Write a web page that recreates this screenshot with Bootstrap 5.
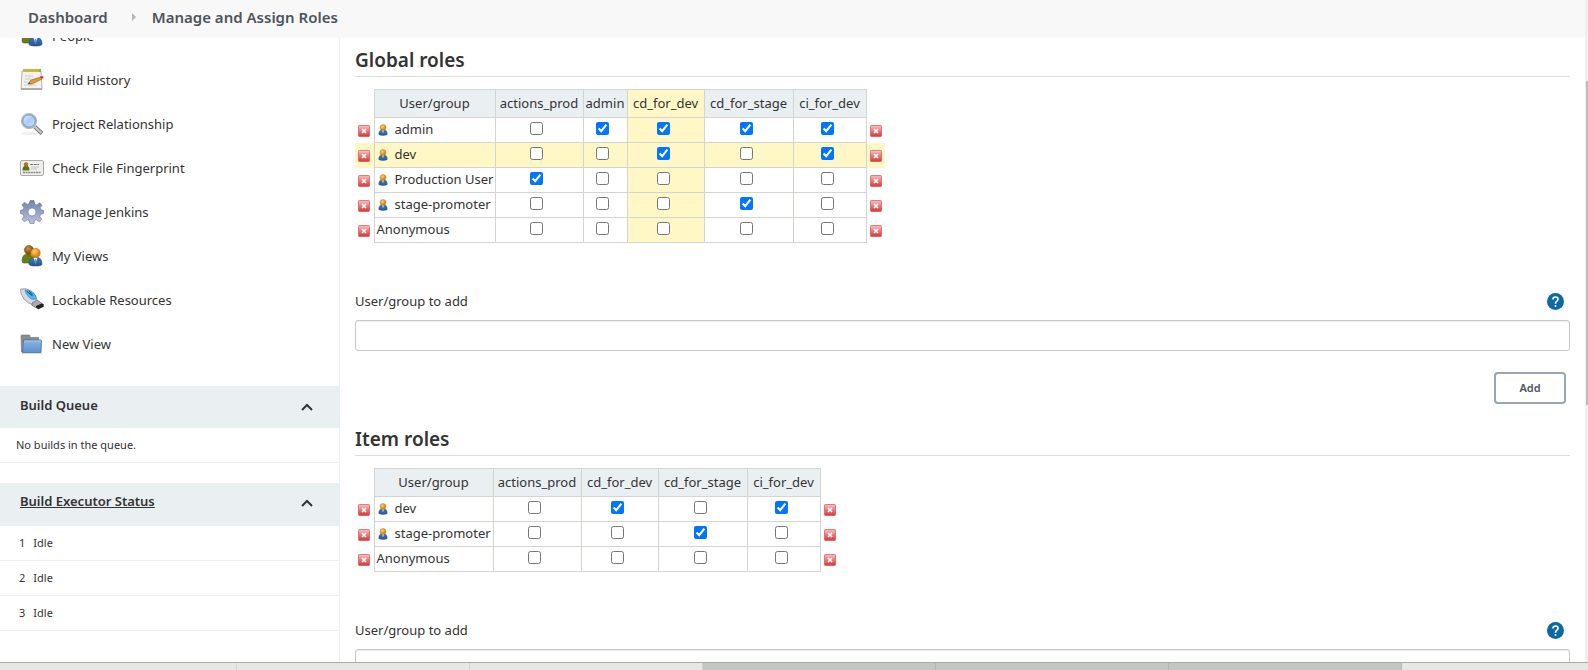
<!DOCTYPE html>
<html lang="en">
<head>
<meta charset="utf-8">
<meta name="viewport" content="width=device-width, initial-scale=1">
<title>Manage and Assign Roles</title>
<link rel="stylesheet" href="https://cdn.jsdelivr.net/npm/bootstrap@5.3.0/dist/css/bootstrap.min.css">
<style>
  body { font-family: "Noto Sans", "Open Sans", sans-serif; font-size: 13px; line-height: 20px; color: #333; }
  a { color: inherit; text-decoration: none; }
  .crumbs { height: 38px; background: #f8f8f8; font-size: 15px; font-weight: 600; color: #4d545d; padding: 0 0 4px 28px; }
  .side { width: 340px; border-right: 1px solid #eaeff2; }
  .tasks { margin-top: -24px; padding-bottom: 20px; }
  .task { height: 44px; padding-left: 20px; gap: 8px; }
  .task svg { width: 24px; height: 24px; }
  .pane-head { background: #eaeff2; height: 42px; padding: 0 26px 4px 20px; font-size: 13px; line-height: 20px; font-weight: 600; }
  .pane-head button { margin-top: 2px; }
  .pane-row { height: 35px; border-bottom: 1px solid #eaeff2; font-size: 11px; padding-left: 16px; }
  .executors .pane-row { padding-left: 19px; gap: 8px; }
  .executors .pane-head { height: 43px; padding-bottom: 7px; }
  .main-area { padding: 8px 15px 0; }
  .section-title { font-size: 19px; line-height: 28px; font-weight: 600; padding-bottom: 2px; border-bottom: 1px solid #ddd; margin-bottom: 12px; }
  .roles { table-layout: fixed; width: 0; border-collapse: collapse; margin-bottom: 48px; }
  .roles td, .roles th { height: 25px; padding: 0 5px 0 0; border: 1px solid #d3d5cf; text-align: center; white-space: nowrap; line-height: 20px; }
  .roles th { height: 28px; padding: 0 0 2px; background: #eaeff2; font-weight: 400; }
  .roles .edge { border: 0; background: none; padding: 0; }
  .roles td.who { text-align: left; padding: 0 0 2px 2px; }
  .roles .hl, .roles tr.hl > td { background: #fff8c6; }
  .roles input { display: block; margin: -3px auto 0; }
  .roles button { display: block; margin: 1px 0 0 3px; }
  .roles svg { width: 12px; height: 12px; display: block; }
  .who svg { margin: 2px 6px 0 0; }
  .c-edge { width: 19px; } .c-who { width: 121px; } .c-who2 { width: 119px; } .c-prod { width: 88px; }
  .c-admin { width: 44px; } .c-dev { width: 77px; } .c-stage { width: 89px; } .c-ci { width: 73px; }
  .help { margin-right: 6px; }
  .name-label { margin-bottom: 9px; }
  .name-box { height: 31px; border: 1px solid #c8c8c8; border-radius: 3px; box-shadow: inset 0 1px 1px #eee; padding: 4px 8px; font-size: 13px; }
  .add-btn { width: 72px; height: 32px; border: 2px solid #98a6b0; border-radius: 4px; background: #fff; color: #4d545d; font-size: 11px; font-weight: 600; line-height: 16px; padding: 0; margin: 21px 4px 21px 0; }
  .scroll { width: 3px; background: #f0f0f0; padding-left: 1px; }
  .scroll div { background: #bcbcbc; height: 49%; margin-top: 81px; }
  .taskbar { height: 8px; padding-left: 4px; border-top: 1px solid #a9aba7; background: #e7e7e5; }
  .taskbar i { width: 233px; border-right: 1px solid #d3d3d1; }
  .taskbar .on { background: #c4c6c4; border-color: #b5b7b5; }
</style>
</head>
<body>
<svg class="position-absolute" width="0" height="0" aria-hidden="true">
  <defs>
    <linearGradient id="gRed" x2="0" y2="1"><stop offset="0" stop-color="#f5c3c3"/><stop offset=".5" stop-color="#e97777"/><stop offset="1" stop-color="#d83636"/></linearGradient>
    <linearGradient id="gBlue" x2="0" y2="1"><stop offset="0" stop-color="#3a7cc4"/><stop offset="1" stop-color="#2a5590"/></linearGradient>
    <radialGradient id="gOr" cx=".4" cy=".35"><stop offset="0" stop-color="#ffd27a"/><stop offset="1" stop-color="#dc8410"/></radialGradient>
    <radialGradient id="gBr" cx=".4" cy=".35"><stop offset="0" stop-color="#c79545"/><stop offset="1" stop-color="#855310"/></radialGradient>
    <linearGradient id="gGear" x2="0" y2="1"><stop offset="0" stop-color="#6b86ad"/><stop offset="1" stop-color="#c3c0e0"/></linearGradient>
    <linearGradient id="gFold" x2="0" y2="1"><stop offset="0" stop-color="#8db5e2"/><stop offset="1" stop-color="#5c91cf"/></linearGradient>
    <linearGradient id="gLens" x2="1" y2="1"><stop offset="0" stop-color="#eaf4ff"/><stop offset=".5" stop-color="#a9cbf2"/><stop offset="1" stop-color="#d7e9fb"/></linearGradient>
  </defs>
  <symbol id="people" viewBox="0 0 24 24"><path d="M2 17q0-7 6-7t6 7l-5 2H4q-2 0-2-2Z" fill="#6a7d14" stroke="#4d5c0c" stroke-width=".6"/><circle cx="9" cy="6" r="4.600" fill="url(#gBr)" stroke="#7a4d10" stroke-width=".5"/><path d="M9 20q0-7 6.500-7t6.500 7q0 2-6.500 2T9 20Z" fill="url(#gBlue)" stroke="#244f89" stroke-width=".6"/><path d="m13.500 13.500 2 6 2-6Z" fill="#fff"/><path d="m15 15-.5 3 1 2 1-2-.5-3Z" fill="#5e8cc4"/><circle cx="15.500" cy="9" r="4.800" fill="url(#gOr)" stroke="#bd750f" stroke-width=".5"/></symbol>
  <symbol id="history" viewBox="0 0 24 24"><path d="M2 3h19l1 18H1Z" fill="#f1f1ef" stroke="#a5a7a2" stroke-width=".8"/><path d="M1 20h21v2H1Z" fill="#a9aba6"/><path d="M3 1h18v3H3Z" fill="#b6a329"/><path d="M4 1v3m2-3v3m2-3v3m2-3v3m2-3v3m2-3v3m2-3v3m2-3v3" stroke="#e5d667" stroke-width=".8"/><path d="M5 8h8M5 11h6M4 14h4M4 17h12" stroke="#cccdca"/><path d="m8 16 3-4 10-3 1 2L12 16Z" fill="#e29a32" stroke="#8f5914" stroke-width=".6"/><path d="m20 8.500 2-.5q2 .5 1.500 2l-2 1Z" fill="#e33428"/><path d="m8 16 1.500-2 1 1.500Z" fill="#444"/></symbol>
  <symbol id="lens" viewBox="0 0 24 24"><ellipse cx="10" cy="21.500" rx="9" ry="1.500" fill="#eee"/><path d="m14.500 14.500 7.500 7" stroke="#777975" stroke-width="4"/><path d="m14.500 14.500 7 6.500" stroke="#c8cac8" stroke-width="2.200"/><circle cx="9" cy="9" r="7.300" fill="url(#gLens)" stroke="#b5b7b4" stroke-width="1.500"/><circle cx="9" cy="9" r="6.200" fill="none" stroke="#6e96cb"/></symbol>
  <symbol id="idcard" viewBox="0 0 24 24"><rect x=".5" y="4.500" width="23" height="15" rx="1.500" fill="#efefed" stroke="#aaaca7"/><path d="M2.500 14.500q0-5 3.500-5t3.500 5Z" fill="#5c7411"/><circle cx="6" cy="8.500" r="2.300" fill="#b07423"/><path d="M10 8.500h9" stroke="#777" stroke-dasharray="3 .7"/><path d="M11 11h8m-8 2h6" stroke="#bbb" stroke-width=".8"/><path d="M3 16.500h18" stroke="#888" stroke-width="1.500" stroke-dasharray="2 .6"/></symbol>
  <symbol id="gear" viewBox="0 0 24 24"><path fill="url(#gGear)" stroke="#66759c" stroke-width=".6" fill-rule="evenodd" d="m10 .5h4l.6 3.500 2.200.9L19.700 2.800l2.300 2.500-1.900 2.500.9 2L23.700 10.500v3l-3 .7-.9 2.200 2 2.800-2.500 2.500-2.900-1.900-2 .8L14 23.700h-4l-.7-3.100-2-.8-2.900 1.900-2.500-2.500 2-2.800-.9-2.200L.3 13.500v-3l2.700-.7.900-2-1.900-3 2.500-2.500 2.700 2.100 2.200-.9ZM12 8a4 4 0 1 0 .01 0Z"/></symbol>
  <symbol id="usb" viewBox="0 0 24 24"><path d="M.5 1Q6-.5 12 3.500q4 3 5 8.500-.5 4-4 5-5-1.500-9-6Q0 6 .5 1Z" fill="#d6d9e0" stroke="#8d919d" stroke-width=".8"/><path d="M5 2q5-.5 9 3.500 2.500 3 2 5.500l-4 .5Q6 8 5 2Z" fill="#48b8ef" stroke="#267eae" stroke-width=".5"/><path d="m7 3.500 5 4m-3-4.500 4 4.500" stroke="#174b76"/><path d="m12 15 5-3 6.500 4.500v2L18.500 21 12 17.500Z" fill="#a9acb0" stroke="#555" stroke-width=".6"/><path d="m16 18 5.500-2.500 2 1v2L18.500 21l-2.500-1.500Z" fill="#222"/></symbol>
  <symbol id="folder" viewBox="0 0 24 24"><path d="M1 4q0-1 1-1h7q1 0 1 1v1.500h8.500v5L3 20H1.500Z" fill="#8c8e89" stroke="#6e706c" stroke-width=".6"/><path d="M3.500 8h17q1 0 1 1l-.5 11.500H2.500Z" fill="url(#gFold)" stroke="#3e71ad" stroke-width=".8"/><path d="M4.300 9h16.500" stroke="#bad4f0" stroke-width=".7"/><path d="M2 21.500h20" stroke="#ddd"/></symbol>
  <symbol id="user" viewBox="0 0 12 12"><path d="M1.500 10Q1.500 5.500 6 5.500T10.500 10Q10.500 11.700 6 11.700T1.500 10Z" fill="url(#gBlue)"/><path d="m5 6 1 3.500L7 6Z" fill="#dce8f5"/><circle cx="6" cy="3.500" r="3" fill="url(#gOr)" stroke="#c07b14" stroke-width=".4"/></symbol>
  <symbol id="remove" viewBox="0 0 12 12"><rect x=".5" y=".5" width="11" height="11" rx=".8" fill="url(#gRed)" stroke="#d65353" stroke-opacity=".7"/><path d="m4 4 4 4m0-4-4 4" stroke="#fff" stroke-width="1.700"/></symbol>
  <symbol id="chev" viewBox="0 0 12 8"><path d="m1 7 5-5 5 5" fill="none" stroke="#333" stroke-width="2"/></symbol>
  <symbol id="help" viewBox="0 0 17 17"><circle cx="8.500" cy="8.500" r="8.500" fill="#0b6aa2"/><path d="M6 6.500Q6 4 8.500 4T11 6.300Q11 7.500 9.500 8.500 8.500 9.200 8.500 10.700M8.500 12v1.800" fill="none" stroke="#fff" stroke-width="1.700"/></symbol>
</svg>

<div class="d-flex flex-column vh-100 overflow-hidden">
  <div class="d-flex flex-grow-1 overflow-hidden">
    <div class="d-flex flex-column flex-grow-1 overflow-hidden">
      <nav class="crumbs d-flex align-items-center flex-shrink-0" aria-label="breadcrumb">
        <a href="#">Dashboard</a>
        <svg class="ms-4 me-3" width="4" height="8" viewBox="0 0 4 8"><path d="m0 0 4 4-4 4Z" fill="#b5b5b5"/></svg>
        <a href="#">Manage and Assign Roles</a>
      </nav>
      <div class="d-flex flex-grow-1 overflow-hidden">
        <aside class="side flex-shrink-0">
          <div class="tasks">
            <a class="task d-flex align-items-center" href="#"><svg><use href="#people"/></svg>People</a>
            <a class="task d-flex align-items-center" href="#"><svg><use href="#history"/></svg>Build History</a>
            <a class="task d-flex align-items-center" href="#"><svg><use href="#lens"/></svg>Project Relationship</a>
            <a class="task d-flex align-items-center" href="#"><svg><use href="#idcard"/></svg>Check File Fingerprint</a>
            <a class="task d-flex align-items-center" href="#"><svg><use href="#gear"/></svg>Manage Jenkins</a>
            <a class="task d-flex align-items-center" href="#"><svg><use href="#people"/></svg>My Views</a>
            <a class="task d-flex align-items-center" href="#"><svg><use href="#usb"/></svg>Lockable Resources</a>
            <a class="task d-flex align-items-center" href="#"><svg><use href="#folder"/></svg>New View</a>
          </div>
          <section class="mb-3 pb-1">
            <div class="pane-head d-flex align-items-center justify-content-between">Build Queue
              <button class="border-0 bg-transparent p-0 lh-1" aria-label="Collapse build queue"><svg width="12" height="8"><use href="#chev"/></svg></button></div>
            <div class="pane-row d-flex align-items-center">No builds in the queue.</div>
          </section>
          <section class="executors">
            <div class="pane-head d-flex align-items-center justify-content-between"><a class="text-decoration-underline" href="#">Build Executor Status</a>
              <button class="border-0 bg-transparent p-0 lh-1" aria-label="Collapse executors"><svg width="12" height="8"><use href="#chev"/></svg></button></div>
            <div class="pane-row d-flex align-items-center"><span>1</span><span>Idle</span></div>
            <div class="pane-row d-flex align-items-center"><span>2</span><span>Idle</span></div>
            <div class="pane-row d-flex align-items-center"><span>3</span><span>Idle</span></div>
          </section>
        </aside>
        <main class="main-area flex-grow-1">
          <h2 class="section-title">Global roles</h2>
          <table class="roles" id="globalRoles"></table>
          <div class="name-label d-flex justify-content-between align-items-center">
            <label for="globalName">User/group to add</label>
            <a class="help lh-1" href="#" aria-label="Help"><svg width="17" height="17"><use href="#help"/></svg></a>
          </div>
          <input class="name-box d-block w-100" id="globalName" type="text">
          <div class="d-flex justify-content-end"><button class="add-btn" type="button">Add</button></div>
          <h2 class="section-title">Item roles</h2>
          <table class="roles" id="itemRoles"></table>
          <div class="name-label d-flex justify-content-between align-items-center">
            <label for="itemName">User/group to add</label>
            <a class="help lh-1" href="#" aria-label="Help"><svg width="17" height="17"><use href="#help"/></svg></a>
          </div>
          <input class="name-box d-block w-100" id="itemName" type="text">
        </main>
      </div>
    </div>
    <div class="scroll flex-shrink-0"><div></div></div>
  </div>
  <div class="taskbar d-flex flex-shrink-0"><i></i><i></i><i></i><i class="on"></i><i class="on"></i><i class="on"></i></div>
</div>

<script src="https://cdn.jsdelivr.net/npm/bootstrap@5.3.0/dist/js/bootstrap.bundle.min.js"></script>
<script>
  // Each row: user name followed by one 0/1 flag per role.
  function drawRoles(id, cols, roles, rows, hlCol, hlRow) {
    const removeCell = name => `<td class="edge"><button type="button" class="border-0 bg-transparent p-0" aria-label="Remove ${name}"><svg><use href="#remove"/></svg></button></td>`;
    const head = roles.map((r, i) => `<th scope="col" class="${i === hlCol ? 'hl' : ''}">${r}</th>`).join('');
    const body = rows.map(([name, ...flags], n) => {
      const icon = name === 'Anonymous' ? '' : '<svg><use href="#user"/></svg>';
      const boxes = flags.map((f, i) => `<td class="${i === hlCol ? 'hl' : ''}"><input type="checkbox" aria-label="${name}: ${roles[i]}"${f ? ' checked' : ''}></td>`).join('');
      return `<tr class="${n === hlRow ? 'hl' : ''}">${removeCell(name)}<td class="who"><div class="d-flex align-items-center">${icon}${name}</div></td>${boxes}${removeCell(name)}</tr>`;
    }).join('');
    document.getElementById(id).innerHTML =
      `<colgroup>${cols.map(c => `<col class="c-${c}">`).join('')}</colgroup>` +
      `<thead><tr><td class="edge"></td><th scope="col">User/group</th>${head}<td class="edge"></td></tr></thead><tbody>${body}</tbody>`;
  }
  drawRoles('globalRoles', ['edge', 'who', 'prod', 'admin', 'dev', 'stage', 'ci', 'edge'],
    ['actions_prod', 'admin', 'cd_for_dev', 'cd_for_stage', 'ci_for_dev'],
    [['admin', 0, 1, 1, 1, 1], ['dev', 0, 0, 1, 0, 1], ['Production User', 1, 0, 0, 0, 0],
     ['stage-promoter', 0, 0, 0, 1, 0], ['Anonymous', 0, 0, 0, 0, 0]], 2, 1);
  drawRoles('itemRoles', ['edge', 'who2', 'prod', 'dev', 'stage', 'ci', 'edge'],
    ['actions_prod', 'cd_for_dev', 'cd_for_stage', 'ci_for_dev'],
    [['dev', 0, 1, 0, 1], ['stage-promoter', 0, 0, 1, 0], ['Anonymous', 0, 0, 0, 0]], -1, -1);
</script>
</body>
</html>
